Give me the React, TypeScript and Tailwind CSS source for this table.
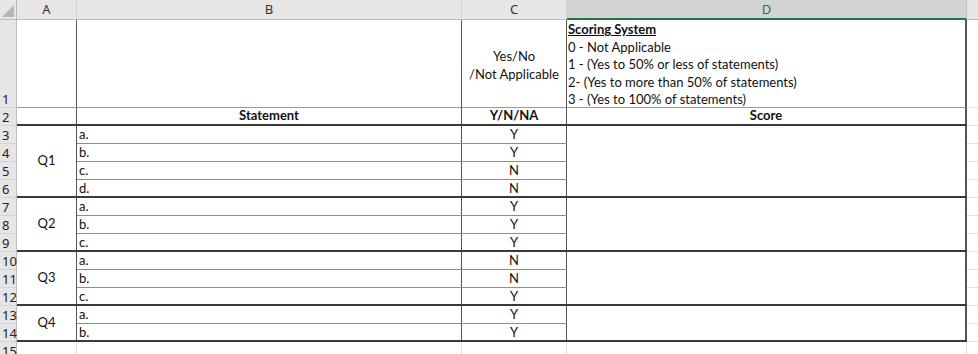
const groups = [
  { q: "Q1", rows: [["a.", "Y"], ["b.", "Y"], ["c.", "N"], ["d.", "N"]] },
  { q: "Q2", rows: [["a.", "Y"], ["b.", "Y"], ["c.", "Y"]] },
  { q: "Q3", rows: [["a.", "N"], ["b.", "N"], ["c.", "Y"]] },
  { q: "Q4", rows: [["a.", "Y"], ["b.", "Y"]] },
];

const rowNums = Array.from({ length: 12 }, (_, i) => i + 3);

function ColHeader({ label, className }: { label: string; className: string }) {
  return (
    <div className={`flex items-center justify-center border-r border-r-[#d4d4d4] border-b border-b-[#bcbcbc] pt-[1px] text-[13px] text-[#333] ${className}`}>
      {label}
    </div>
  );
}

function RowNum({ n, className }: { n: number; className: string }) {
  return (
    <div className={`flex items-end border-b border-b-[#d4d4d4] pb-[1px] pl-[2px] text-[13px] leading-none text-[#222] ${className}`}>
      {n}
    </div>
  );
}

export default function App() {
  return (
    <div className="h-[354px] w-[978px] overflow-hidden bg-white font-['Lato',sans-serif] text-[13px] text-[#111]">
      {/* column headers */}
      <div className="flex h-[20px] bg-[#e6e6e6] font-['Noto_Sans',sans-serif]">
        <div className="relative w-[17px] border-r border-r-[#bcbcbc] border-b border-b-[#bcbcbc]">
          <div className="absolute bottom-[2px] right-[2px] h-0 w-0 [border-bottom:12px_solid_#b6b6b6] [border-left:12px_solid_transparent]" />
        </div>
        <ColHeader label="A" className="w-[60px]" />
        <ColHeader label="B" className="w-[385px]" />
        <ColHeader label="C" className="w-[105px]" />
        <div className="flex w-[400px] items-center justify-center border-r border-r-[#c4c4c4] border-b-2 border-b-[#217346] bg-[#d3d3d3] pt-[2px] text-[13px] text-[#217346]">
          D
        </div>
        <div className="flex-1 border-b border-b-[#bcbcbc]" />
      </div>

      <div className="flex">
        {/* row numbers */}
        <div className="flex w-[17px] flex-col border-r border-r-[#bcbcbc] bg-[#e6e6e6] font-['Noto_Sans',sans-serif]">
          <RowNum n={1} className="h-[88px]" />
          <RowNum n={2} className="h-[18px]" />
          {rowNums.map((n) => (
            <RowNum key={n} n={n} className={n >= 10 ? "h-[18px] pl-0" : "h-[18px]"} />
          ))}
          <RowNum n={15} className="h-[18px] pl-0" />
        </div>

        <div className="flex flex-1 flex-col">
          {/* row 1 */}
          <div className="flex h-[88px]">
            <div className="w-[60px] border-r border-r-[#555] border-b border-b-[#9a9a9a]" />
            <div className="w-[385px] border-r border-r-[#555] border-b border-b-[#9a9a9a]" />
            <div className="flex w-[105px] flex-col items-center justify-center border-r border-r-[#555] border-b border-b-[#9a9a9a] pt-[3px] text-center leading-[18px]">
              <span>Yes/No</span>
              <span>/Not Applicable</span>
            </div>
            <div className="flex w-[400px] flex-col border-r-2 border-r-[#555] border-b border-b-[#9a9a9a] pl-[1px] pt-[1px] leading-[17.5px]">
              <span className="font-bold underline">Scoring System</span>
              <span>0 - Not Applicable</span>
              <span>1 - (Yes to 50% or less of statements)</span>
              <span>2- (Yes to more than 50% of statements)</span>
              <span>3 - (Yes to 100% of statements)</span>
            </div>
            <div className="flex-1 border-b border-b-[#e1e1e1]" />
          </div>

          {/* row 2 */}
          <div className="flex h-[18px]">
            <div className="flex w-[950px] border-b-2 border-b-[#3a3a3a] font-bold">
              <div className="w-[60px] border-r border-r-[#555]" />
              <div className="flex w-[385px] items-center justify-center border-r border-r-[#555]">Statement</div>
              <div className="flex w-[105px] items-center justify-center border-r border-r-[#555]">Y/N/NA</div>
              <div className="flex w-[400px] items-center justify-center border-r-2 border-r-[#555]">Score</div>
            </div>
            <div className="flex-1 border-b border-b-[#e1e1e1]" />
          </div>

          {/* question groups */}
          {groups.map((g) => (
            <div key={g.q} className="flex">
              <div className="flex w-[950px] border-b-2 border-b-[#3a3a3a]">
                <div className="flex w-[60px] items-center justify-center border-r border-r-[#555]">{g.q}</div>
                <div className="flex flex-col">
                  {g.rows.map(([s, v], i) => (
                    <div key={i} className="flex h-[18px] border-b border-b-[#8e8e8e] last:h-[16px] last:border-b-0">
                      <div className="flex w-[385px] items-center border-r border-r-[#555] pl-[2px] pt-[1px]">{s}</div>
                      <div className="flex w-[105px] items-center justify-center border-r border-r-[#555] pt-[1px]">{v}</div>
                    </div>
                  ))}
                </div>
                <div className="w-[400px] border-r-2 border-r-[#555]" />
              </div>
              <div className="flex flex-1 flex-col">
                {g.rows.map((_, i) => (
                  <div key={i} className="h-[18px] border-b border-b-[#e1e1e1]" />
                ))}
              </div>
            </div>
          ))}

          {/* row 15 */}
          <div className="flex h-[18px]">
            <div className="w-[60px] border-r border-r-[#e1e1e1]" />
            <div className="w-[385px] border-r border-r-[#e1e1e1]" />
            <div className="w-[105px] border-r border-r-[#e1e1e1]" />
            <div className="w-[400px] border-r border-r-[#e1e1e1]" />
            <div className="flex-1" />
          </div>
        </div>
      </div>
    </div>
  );
}
